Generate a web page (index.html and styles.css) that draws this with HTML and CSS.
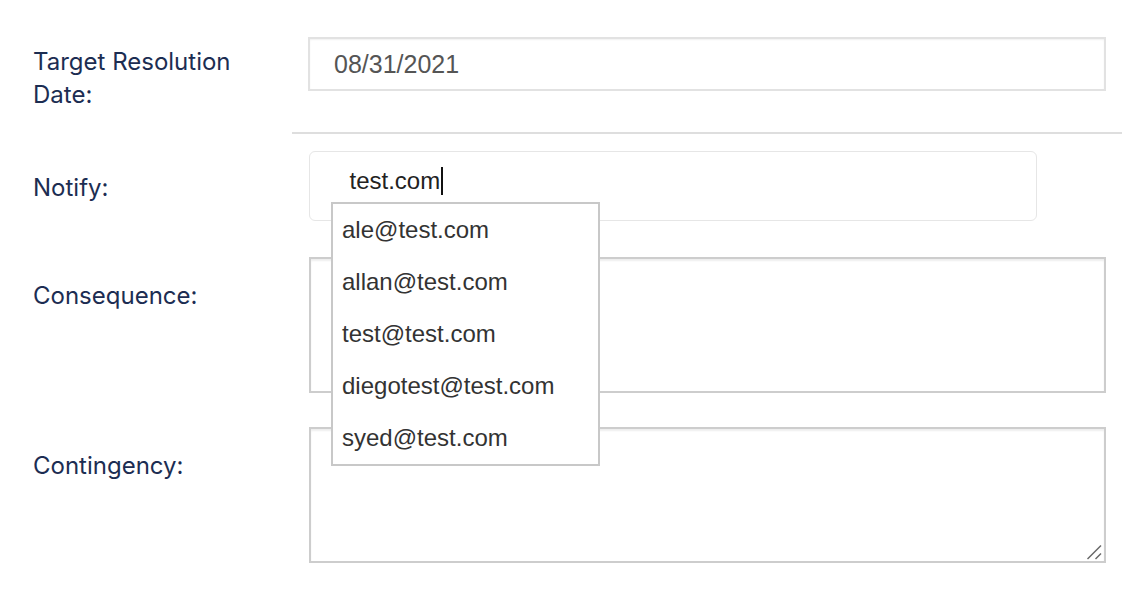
FILE: index.html
```html
<!DOCTYPE html>
<html lang="en">
<head>
<meta charset="utf-8">
<title>Risk form</title>
<link rel="stylesheet" href="styles.css">
</head>
<body>
<div class="form">
  <div class="row row-date">
    <div class="label">Target Resolution<br>Date:</div>
    <div class="field">
      <div class="control date">08/31/2021</div>
    </div>
  </div>

  <div class="divider"></div>

  <div class="row row-notify">
    <div class="label">Notify:</div>
    <div class="field notify-field">
      <div class="control notify"><span class="typed">test.com</span><span class="caret"></span></div>
      <ul class="suggestions">
        <li>ale@test.com</li>
        <li>allan@test.com</li>
        <li>test@test.com</li>
        <li>diegotest@test.com</li>
        <li>syed@test.com</li>
      </ul>
    </div>
  </div>

  <div class="row row-area">
    <div class="label label-top">Consequence:</div>
    <div class="field">
      <div class="control area"></div>
    </div>
  </div>

  <div class="row row-area row-last">
    <div class="label label-top">Contingency:</div>
    <div class="field">
      <div class="control area">
        <svg class="grip" width="16" height="16" viewBox="0 0 16 16" aria-hidden="true">
          <line x1="1.5" y1="15" x2="15" y2="1.5" stroke="#666" stroke-width="1.4"/>
          <line x1="9.5" y1="15" x2="15" y2="9.5" stroke="#666" stroke-width="1.4"/>
        </svg>
      </div>
    </div>
  </div>
</div>
</body>
</html>
```

FILE: styles.css
```css
* {
  box-sizing: border-box;
}

html, body {
  margin: 0;
  padding: 0;
  background: #ffffff;
}

body {
  font-family: Inter, "Noto Sans", "Liberation Sans", sans-serif;
  width: 1140px;
  height: 592px;
  overflow: hidden;
}

.form {
  padding-top: 37px;
}

.row {
  display: grid;
  grid-template-columns: 275px 798px;
  padding-left: 33px;
}

.label {
  font-family: Inter, "Noto Sans", sans-serif;
  font-size: 24px;
  line-height: 33px;
  color: #1c2d52;
}

.row-date .label {
  padding-top: 8px;
}

.row-notify {
  margin-top: 17px;
  align-items: center;
}

.row-notify .label {
  padding-top: 2px;
}

.label-top {
  padding-top: 22px;
}

.row-area {
  margin-top: 36px;
}

.row-last {
  margin-top: 34px;
}

.field {
  position: relative;
}

.control {
  background: #ffffff;
  font-family: "Liberation Sans", Arial, sans-serif;
}

.date {
  height: 54px;
  border: 2px solid #e2e2e2;
  box-shadow: inset 0 1px 2px rgba(0, 0, 0, 0.06);
  padding-left: 24px;
  display: flex;
  align-items: center;
  font-size: 25px;
  color: #555555;
}

.divider {
  height: 2px;
  background: #dedede;
  margin: 21px 0 0 292px;
  width: 830px;
}

.notify-field {
  margin-left: 1px;
  width: 728px;
}

.notify {
  height: 70px;
  border: 1.5px solid #e6e6e6;
  border-radius: 6px;
  padding: 15px 0 0 39.5px;
  font-size: 24px;
  line-height: 28px;
  color: #222222;
  display: flex;
  align-items: flex-start;
}

.caret {
  display: inline-block;
  width: 1.5px;
  height: 28px;
  background: #111111;
  margin-left: 1px;
}

.suggestions {
  position: absolute;
  left: 22px;
  top: 51px;
  width: 269px;
  margin: 0;
  padding: 0;
  list-style: none;
  background: #ffffff;
  border: 2px solid #c8c8c8;
  z-index: 2;
}

.suggestions li {
  height: 52px;
  line-height: 52px;
  padding-left: 9px;
  font-family: "Liberation Sans", Arial, sans-serif;
  font-size: 24px;
  color: #333333;
}

.area {
  position: relative;
  margin-left: 1px;
  width: 797px;
  height: 136px;
  border: 2px solid #cdcdcd;
  box-shadow: inset 0 2px 2px rgba(0, 0, 0, 0.07);
}

.grip {
  position: absolute;
  right: 2px;
  bottom: 1px;
}
```
